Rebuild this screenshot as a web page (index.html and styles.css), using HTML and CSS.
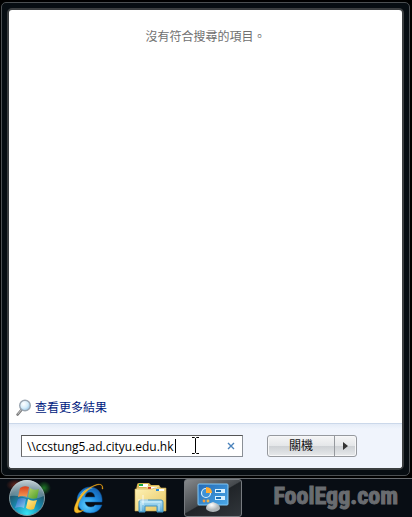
FILE: index.html
```html
<!DOCTYPE html>
<html lang="zh-Hant">
<head>
<meta charset="utf-8">
<meta name="viewport" content="width=device-width, initial-scale=1">
<title>開始功能表</title>
<link rel="stylesheet" href="styles.css">
</head>
<body>
<main class="start-menu">
  <div class="panel">
    <section class="results">
      <p class="empty">沒有符合搜尋的項目。</p>
      <a class="more" href="#">
        <svg width="16" height="18" viewBox="0 0 16 18" aria-hidden="true">
          <defs><radialGradient id="lens" cx=".38" cy=".35" r=".7"><stop offset="0" stop-color="#fff"/><stop offset=".55" stop-color="#d6edfa"/><stop offset="1" stop-color="#93c4e6"/></radialGradient></defs>
          <path d="M5.8 10.5 1.6 15.5" stroke="#777" stroke-width="2.6" stroke-linecap="round"/>
          <path d="M5.4 10.7 1.8 15" stroke="#ccc" stroke-linecap="round"/>
          <circle cx="9" cy="6.5" r="5.3" fill="url(#lens)" stroke="#9aa5b0" stroke-width="1.4"/>
        </svg>
        <span>查看更多結果</span>
      </a>
    </section>
    <footer class="actions">
      <div class="search">
        <input class="query" type="text" aria-label="搜尋" spellcheck="false" value="\\ccstung5.ad.cityu.edu.hk">
        <span class="caret"></span>
        <svg class="pointer" width="9" height="17" viewBox="0 0 9 17" aria-hidden="true"><path d="M1 .5h2.5l1 1 1-1H8M4.5 1.500v14M1 16.500h2.500l1-1 1 1H8" fill="none" stroke="#000"/></svg>
        <button class="clear" type="button" aria-label="清除"><svg width="8" height="8" viewBox="0 0 8 8"><path d="m1 1 6 6M7 1 1 7" stroke="#4b83bb" stroke-width="1.4"/></svg></button>
      </div>
      <div class="power">
        <button class="shutdown" type="button">關機</button>
        <button class="options" type="button" aria-label="關機選項"><svg width="5" height="8" viewBox="0 0 5 8"><path d="M0 0 5 4 0 8z" fill="#333"/></svg></button>
      </div>
    </footer>
  </div>
</main>
<nav class="taskbar">
  <button class="task start" type="button" aria-label="開始">
    <svg width="52" height="38" viewBox="0 0 52 38">
      <defs>
        <radialGradient id="orb" cx=".5" cy=".95" r=".95"><stop offset="0" stop-color="#35e5f5"/><stop offset=".4" stop-color="#168eb5"/><stop offset=".75" stop-color="#245163"/><stop offset="1" stop-color="#667c85"/></radialGradient>
        <linearGradient id="gloss" x2="0" y2="1"><stop offset="0" stop-color="#e3edf0" stop-opacity=".75"/><stop offset="1" stop-color="#b8ccd3" stop-opacity=".3"/></linearGradient>
        <radialGradient id="green"><stop offset="0" stop-color="#26a32b"/><stop offset="1" stop-color="#26a32b" stop-opacity="0"/></radialGradient>
        <radialGradient id="red"><stop offset="0" stop-color="#9c3927"/><stop offset="1" stop-color="#9c3927" stop-opacity="0"/></radialGradient>
        <linearGradient id="pr" x2="0" y2="1"><stop offset="0" stop-color="#d8401c"/><stop offset="1" stop-color="#f39a55"/></linearGradient>
        <linearGradient id="pg" x2="1" y2="1"><stop offset="0" stop-color="#b5d66a"/><stop offset="1" stop-color="#479b25"/></linearGradient>
        <linearGradient id="pb" x2="1" y2="1"><stop offset="0" stop-color="#1f62bd"/><stop offset="1" stop-color="#8ed0f5"/></linearGradient>
        <linearGradient id="py" x2="1" y2="1"><stop offset="0" stop-color="#fff0a0"/><stop offset="1" stop-color="#f3b51d"/></linearGradient>
      </defs>
      <ellipse cx="44" cy="9" rx="7" ry="7" fill="url(#green)" opacity=".7"/>
      <ellipse cx="16" cy="6" rx="10" ry="6" fill="url(#red)" opacity=".7"/>
      <circle cx="27" cy="19" r="17.500" fill="url(#orb)" stroke="#7f979e"/>
      <path d="M10 17a17 16 0 0 1 34 0q-8 4-17 2-9-3-17-2z" fill="url(#gloss)"/>
      <path d="M20 9q4-3 9-1l-2 10q-4-2-9 0z" fill="url(#pr)"/>
      <path d="M30 9q4 3 9 1l-2 9q-5 2-9-1z" fill="url(#pg)"/>
      <path d="M18 20q4-2 8 0l-2 9q-4-2-9 0z" fill="url(#pb)"/>
      <path d="M28 20q4 3 9 1l-3 9q-4 2-8-1z" fill="url(#py)"/>
    </svg>
  </button>
  <button class="task" type="button" aria-label="Internet Explorer">
    <svg width="34" height="34" viewBox="0 0 34 34">
      <defs><radialGradient id="ie" cx=".4" cy=".7" r=".7"><stop offset="0" stop-color="#5fd0ff"/><stop offset=".6" stop-color="#1d8be0"/><stop offset="1" stop-color="#1765b4"/></radialGradient></defs>
      <path d="M30 21H13q1 5 6 5 3 0 4-2h7q-3 8-12 8C10 32 5 26 5 19S11 6 18 6s13 6 12 15zM13 16h10q-1-5-5-5t-5 5z" fill="url(#ie)" stroke="#0c569f" stroke-width=".5"/>
      <path d="M8 14q5-8 13-7-6 1-10 8z" fill="#a8e5ff" opacity=".6"/>
      <path d="M31 8Q31 1 23 4 12 8 6 18-1 31 5 32q3 0 7-3-5 2-6-1-1-5 4-12Q17 6 25 4q6-2 5 4z" fill="#f5bd28" stroke="#d88c0a" stroke-width=".4"/>
    </svg>
  </button>
  <button class="task" type="button" aria-label="檔案總管">
    <svg width="34" height="32" viewBox="0 0 34 32">
      <defs><linearGradient id="folder" x2="1" y2="1"><stop offset="0" stop-color="#fff3b7"/><stop offset="1" stop-color="#e6c45f"/></linearGradient><linearGradient id="stand" x2="0" y2="1"><stop offset="0" stop-color="#b9e5f6"/><stop offset="1" stop-color="#56a8d8"/></linearGradient></defs>
      <path d="M3 3q0-2 2-2h10l2 2h8l2 3h5v23H2V8z" fill="#d8b553"/>
      <path d="M5 2h9v3H5z" fill="#fff"/><path d="M5 2h4v2H5z" fill="#19a941"/>
      <path d="M3 6h9l2-2h11l1 4h6v6H3z" fill="#f2dc8d"/>
      <path d="M14 5h9v2h-9z" fill="#fff"/><path d="M14 5h3v2h-3z" fill="#cc3a21"/>
      <path d="M1 7h17l3-1h11v23H1z" fill="url(#folder)" stroke="#c6a34b" stroke-width=".6"/>
      <path d="M22 7h8v2h-8z" fill="#fff"/><path d="M22 7h3v2h-3z" fill="#2689d8"/>
      <path d="M5 30V20q0-2 2-2h20q2 0 2 2v10h-6v-6H11v6z" fill="url(#stand)" stroke="#4192c0"/>
      <path d="M7 20h20M7 21v8M25 22v7" stroke="#e5fbff" opacity=".7"/>
      <path d="M9 13v10M4 18h10" stroke="#fff" opacity=".8"/>
    </svg>
  </button>
  <button class="task active" type="button" aria-label="控制台">
    <svg width="32" height="30" viewBox="0 0 32 30">
      <defs><linearGradient id="cp" x2="1" y2="1"><stop offset="0" stop-color="#2369b5"/><stop offset="1" stop-color="#4aa8e7"/></linearGradient><radialGradient id="foot" cx=".4" cy=".3"><stop offset="0" stop-color="#fff"/><stop offset="1" stop-color="#aeb5b8"/></radialGradient></defs>
      <rect x="1" y="1" width="30" height="21" rx="1" fill="url(#cp)" stroke="#83c8f4"/>
      <circle cx="9" cy="10" r="4.500" fill="#3e92d7" stroke="#d5efff" stroke-width="1.2"/>
      <path d="M9 10V4q6 0 6 6z" fill="#ffad35"/>
      <path d="M18 6h10v4H18zM18 13h10v4H18z" fill="#d8f1ff"/><path d="M19 7h5v2h-5zM19 14h5v2h-5z" fill="#1c72b8"/>
      <circle cx="7" cy="18" r="1.400" fill="#f79b39"/><circle cx="11" cy="18" r="1.400" fill="#f4b449"/>
      <path d="M9 25q0-4 7-6 7 2 7 6 0 3-7 4-7-1-7-4z" fill="url(#foot)"/>
    </svg>
  </button>
  <span class="brand">FoolEgg.com</span>
</nav>
</body>
</html>
```
FILE: styles.css
```css
* { box-sizing: border-box; }

body {
  margin: 0;
  min-height: 100vh;
  display: flex;
  flex-direction: column;
  background: #000;
  font: 12px/16px "Noto Sans", "Noto Sans CJK TC", sans-serif;
}

button {
  display: flex;
  align-items: center;
  justify-content: center;
  margin: 0;
  padding: 0;
  border: 0;
  background: none;
  font: inherit;
}

svg { display: block; }

.start-menu {
  flex: 1;
  display: flex;
  margin: 2px 2px 2px 1px;
  padding: 5px;
  border: 1px solid #4b4f52;
  border-radius: 5px;
  background: #070d12;
}

.panel {
  flex: 1;
  display: flex;
  flex-direction: column;
  overflow: hidden;
  border: 2px solid #3b3e40;
  border-radius: 5px;
  background: #fff;
}

.results {
  flex: 1;
  display: flex;
  flex-direction: column;
  justify-content: space-between;
  padding: 19px 7px 6px;
}

.empty {
  margin: 0;
  text-align: center;
  color: #707070;
}

.more {
  display: flex;
  align-items: center;
  align-self: flex-start;
  gap: 3px;
  color: #001a80;
  text-decoration: none;
}

.actions {
  display: flex;
  align-items: center;
  gap: 24px;
  height: 45px;
  padding: 0 45px 0 12px;
  border-top: 1px solid #cbd8ea;
  background: linear-gradient(#e4ecf7, #f0f4fc 5px);
}

.search {
  position: relative;
  flex: 1;
}

.query {
  display: block;
  width: 100%;
  height: 22px;
  padding: 0 24px 0 5px;
  border: 1px solid #8a8f96;
  border-top-color: #555;
  border-left-color: #666;
  border-radius: 0;
  outline: 0;
  background: #fff;
  color: #000;
  font: 12px/18px "Open Sans", "Noto Sans", sans-serif;
}

.caret {
  position: absolute;
  top: 4px;
  left: 154px;
  width: 1px;
  height: 14px;
  background: #000;
}

.pointer {
  position: absolute;
  top: 2px;
  left: 170px;
}

.clear {
  position: absolute;
  top: 3px;
  right: 4px;
  width: 16px;
  height: 16px;
}

.power {
  display: flex;
  height: 22px;
  border: 1px solid #96999e;
  border-radius: 3px;
  background: linear-gradient(#f5f5f6, #e5e7e9 48%, #cdd0d4 50%, #e7e9eb);
  box-shadow: inset 0 0 0 1px #f7f7f8;
}

.shutdown { width: 66px; color: #111; }

.options {
  width: 22px;
  border-left: 1px solid #96999e;
}

.taskbar {
  display: flex;
  align-items: center;
  height: 39px;
  border-top: 1px solid #686c70;
  background: #080d14;
}

.task {
  width: 62px;
  height: 38px;
}

.start {
  width: 52px;
  margin-right: 6px;
}

.active {
  width: 58px;
  margin-left: 2px;
  border: 1px solid #777b80;
  border-radius: 3px;
  background: linear-gradient(150deg, #85888b, #45494d 48%, #202428 50%, #31363b);
}

.brand {
  margin: 0 14px 4px auto;
  color: #696c70;
  font: bold 24px/28px "Roboto Condensed", "Open Sans Condensed", Roboto, sans-serif;
  -webkit-text-stroke: 1px #696c70;
}
```
